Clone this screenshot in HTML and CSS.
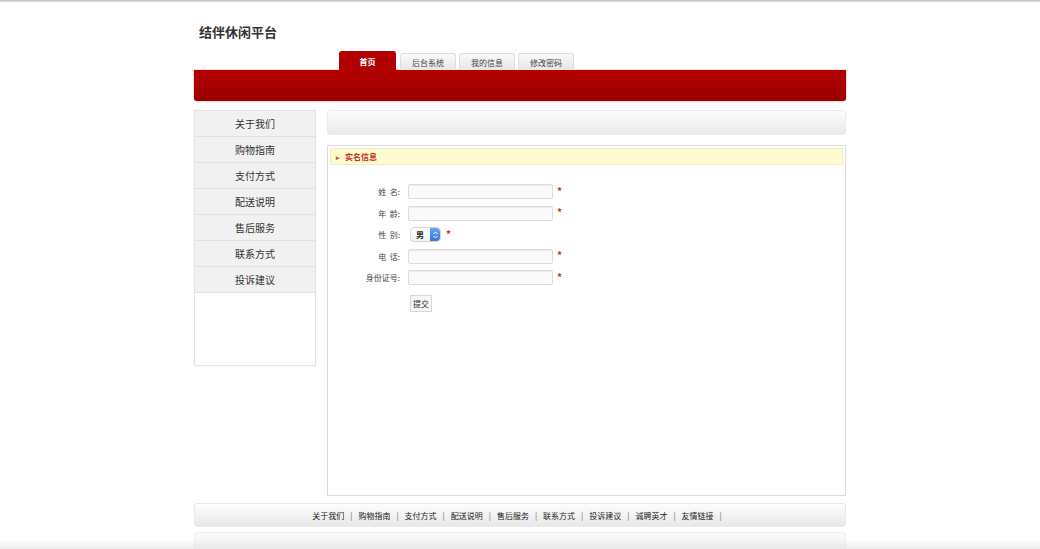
FILE: index.html
```html
<!DOCTYPE html>
<html lang="zh">
<head>
<meta charset="utf-8">
<title>结伴休闲平台</title>
<link rel="stylesheet" href="styles.css">
</head>
<body>
<div class="topline"></div>
<div class="page">
  <div class="header">
    <h1 class="logo">结伴休闲平台</h1>
    <ul class="tabs">
      <li class="tab active">首页</li>
      <li class="tab">后台系统</li>
      <li class="tab">我的信息</li>
      <li class="tab">修改密码</li>
    </ul>
    <div class="redbar"></div>
  </div>
  <div class="main">
    <div class="sidebar">
      <ul class="side-list">
        <li>关于我们</li>
        <li>购物指南</li>
        <li>支付方式</li>
        <li>配送说明</li>
        <li>售后服务</li>
        <li>联系方式</li>
        <li>投诉建议</li>
      </ul>
    </div>
    <div class="content">
      <div class="crumb"></div>
      <div class="panel">
        <div class="panel-head"><span class="arrow">▸</span>实名信息</div>
        <form class="form">
          <div class="row"><label class="lbl">姓&nbsp;&nbsp;名:</label><span class="input"></span><span class="req">*</span></div>
          <div class="row"><label class="lbl">年&nbsp;&nbsp;龄:</label><span class="input"></span><span class="req">*</span></div>
          <div class="row"><label class="lbl">性&nbsp;&nbsp;别:</label><span class="select"><span class="sel-text">男</span><span class="sel-btn"><svg width="7" height="10" viewBox="0 0 7 10"><path d="M1.5 4 L3.5 2 L5.5 4 M1.5 6 L3.5 8 L5.5 6" fill="none" stroke="#fff" stroke-width="1"/></svg></span></span><span class="req req-sel">*</span></div>
          <div class="row"><label class="lbl">电&nbsp;&nbsp;话:</label><span class="input"></span><span class="req">*</span></div>
          <div class="row"><label class="lbl">身份证号:</label><span class="input"></span><span class="req">*</span></div>
          <div class="row row-btn"><span class="lbl"></span><span class="btn">提交</span></div>
        </form>
      </div>
    </div>
  </div>
  <div class="footer">
    <span>关于我们</span><i>|</i><span>购物指南</span><i>|</i><span>支付方式</span><i>|</i><span>配送说明</span><i>|</i><span>售后服务</span><i>|</i><span>联系方式</span><i>|</i><span>投诉建议</span><i>|</i><span>诚聘英才</span><i>|</i><span>友情链接</span><i>|</i>
  </div>
  <div class="footer2"></div>
</div>
<div class="shade"></div>
</body>
</html>
```
FILE: styles.css
```css
html, body {
  margin: 0;
  padding: 0;
  background: #fff;
  height: 549px;
  overflow: hidden;
}
body {
  font-family: "Noto Sans CJK SC", "Liberation Sans", sans-serif;
  color: #333;
  position: relative;
}
.topline {
  height: 2px;
  background: linear-gradient(#bdbdbd, #e4e4e4);
}
.page {
  width: 652px;
  margin: 0 auto;
}
.header {
  padding-top: 19px;
}
.logo {
  margin: 0 0 0 5px;
  font-size: 13px;
  font-weight: 600;
  line-height: 22px;
  color: #333;
  height: 30px;
}
.tabs {
  list-style: none;
  margin: 0 0 0 145px;
  padding: 0;
  display: flex;
  gap: 3px;
  height: 19px;
  align-items: flex-end;
}
.tab {
  box-sizing: border-box;
  width: 56px;
  height: 17px;
  font-size: 8px;
  line-height: 17px;
  text-align: center;
  color: #444;
  background: linear-gradient(#fafafa, #e6e6e6);
  border: 1px solid #dedede;
  border-bottom: none;
  border-radius: 3px 3px 0 0;
}
.tab.active {
  width: 57px;
  height: 19px;
  line-height: 19px;
  background: #b00000;
  border-color: #b00000;
  color: #fff;
  font-weight: 600;
  margin-right: 1px;
}
.redbar {
  height: 31px;
  background: linear-gradient(#b40000, #9a0000);
  border-radius: 0 0 3px 3px;
  box-shadow: 0 0 2px rgba(160, 0, 0, 0.5);
}
.main {
  display: flex;
  gap: 11px;
  margin-top: 9px;
}
.sidebar {
  width: 122px;
  height: 256px;
  border: 1px solid #e4e4e4;
  background: #fff;
  box-sizing: border-box;
  box-shadow: 0 0 2px rgba(0,0,0,0.05);
}
.side-list {
  list-style: none;
  margin: 0;
  padding: 0;
}
.side-list li {
  height: 26px;
  line-height: 26px;
  text-align: center;
  font-size: 10px;
  color: #333;
  background: #f1f1f1;
  border-bottom: 1px solid #e2e2e2;
  box-sizing: border-box;
}
.content {
  flex: 1;
}
.crumb {
  height: 25px;
  border-radius: 3px;
  background: linear-gradient(#fdfdfd, #e9e9e9);
  border: 1px solid #ececec;
  box-sizing: border-box;
}
.panel {
  margin-top: 10px;
  height: 351px;
  border: 1px solid #dcdcdc;
  box-sizing: border-box;
  padding: 2px;
}
.panel-head {
  height: 15px;
  line-height: 15px;
  background: #fffbd0;
  border: 1px solid #f3efc4;
  font-size: 8px;
  color: #c0331a;
  padding-left: 5px;
  font-weight: 600;
}
.arrow {
  font-size: 7px;
  margin-right: 5px;
  color: #d06020;
}
.form {
  padding-top: 16px;
}
.row {
  display: flex;
  align-items: center;
  height: 21.5px;
}
.lbl {
  width: 70px;
  text-align: right;
  font-size: 8px;
  color: #444;
  margin-right: 8px;
}
.input {
  width: 143px;
  height: 13px;
  border: 1px solid #dcdcdc;
  border-radius: 2px;
  background: #fafafa;
  box-shadow: inset 0 1px 1px rgba(0,0,0,0.06);
}
.req {
  color: #d03030;
  font-size: 10px;
  margin-left: 4px;
  margin-top: -3px;
  font-weight: bold;
}
.req-sel {
  margin-left: 5px;
}
.select {
  display: flex;
  align-items: center;
  height: 13px;
  border: 1px solid #d6d6d6;
  border-radius: 4px;
  background: linear-gradient(#fff, #f0f0f0);
  margin-left: 2px;
}
.sel-text {
  font-size: 8px;
  font-weight: 600;
  padding: 0 6px 0 5px;
  color: #222;
}
.sel-btn {
  width: 10px;
  height: 13px;
  border-radius: 0 4px 4px 0;
  background: linear-gradient(#6aa6f5, #2f73e0);
  display: flex;
  align-items: center;
  justify-content: center;
}
.row-btn {
  height: 30px;
}
.btn {
  margin-left: 2px;
  width: 20px;
  height: 15px;
  line-height: 15px;
  text-align: center;
  font-size: 8px;
  border: 1px solid #d8d8d8;
  background: #f6f6f6;
  color: #333;
}
.footer {
  margin-top: 7px;
  height: 24px;
  line-height: 24px;
  border-radius: 3px;
  background: linear-gradient(#fdfdfd, #e8e8e8);
  border: 1px solid #e8e8e8;
  box-sizing: border-box;
  text-align: center;
  font-size: 8px;
  color: #222;
}
.footer i {
  font-style: normal;
  margin: 0 6px;
  color: #666;
}
.footer2 {
  margin-top: 5px;
  height: 30px;
  border-radius: 3px;
  background: linear-gradient(#fafafa, #ececec);
  border: 1px solid #ececec;
  box-sizing: border-box;
}
.shade {
  position: absolute;
  left: 0;
  right: 0;
  bottom: 0;
  height: 10px;
  background: linear-gradient(rgba(255,255,255,0), rgba(225,225,225,0.6));
  pointer-events: none;
}
```
